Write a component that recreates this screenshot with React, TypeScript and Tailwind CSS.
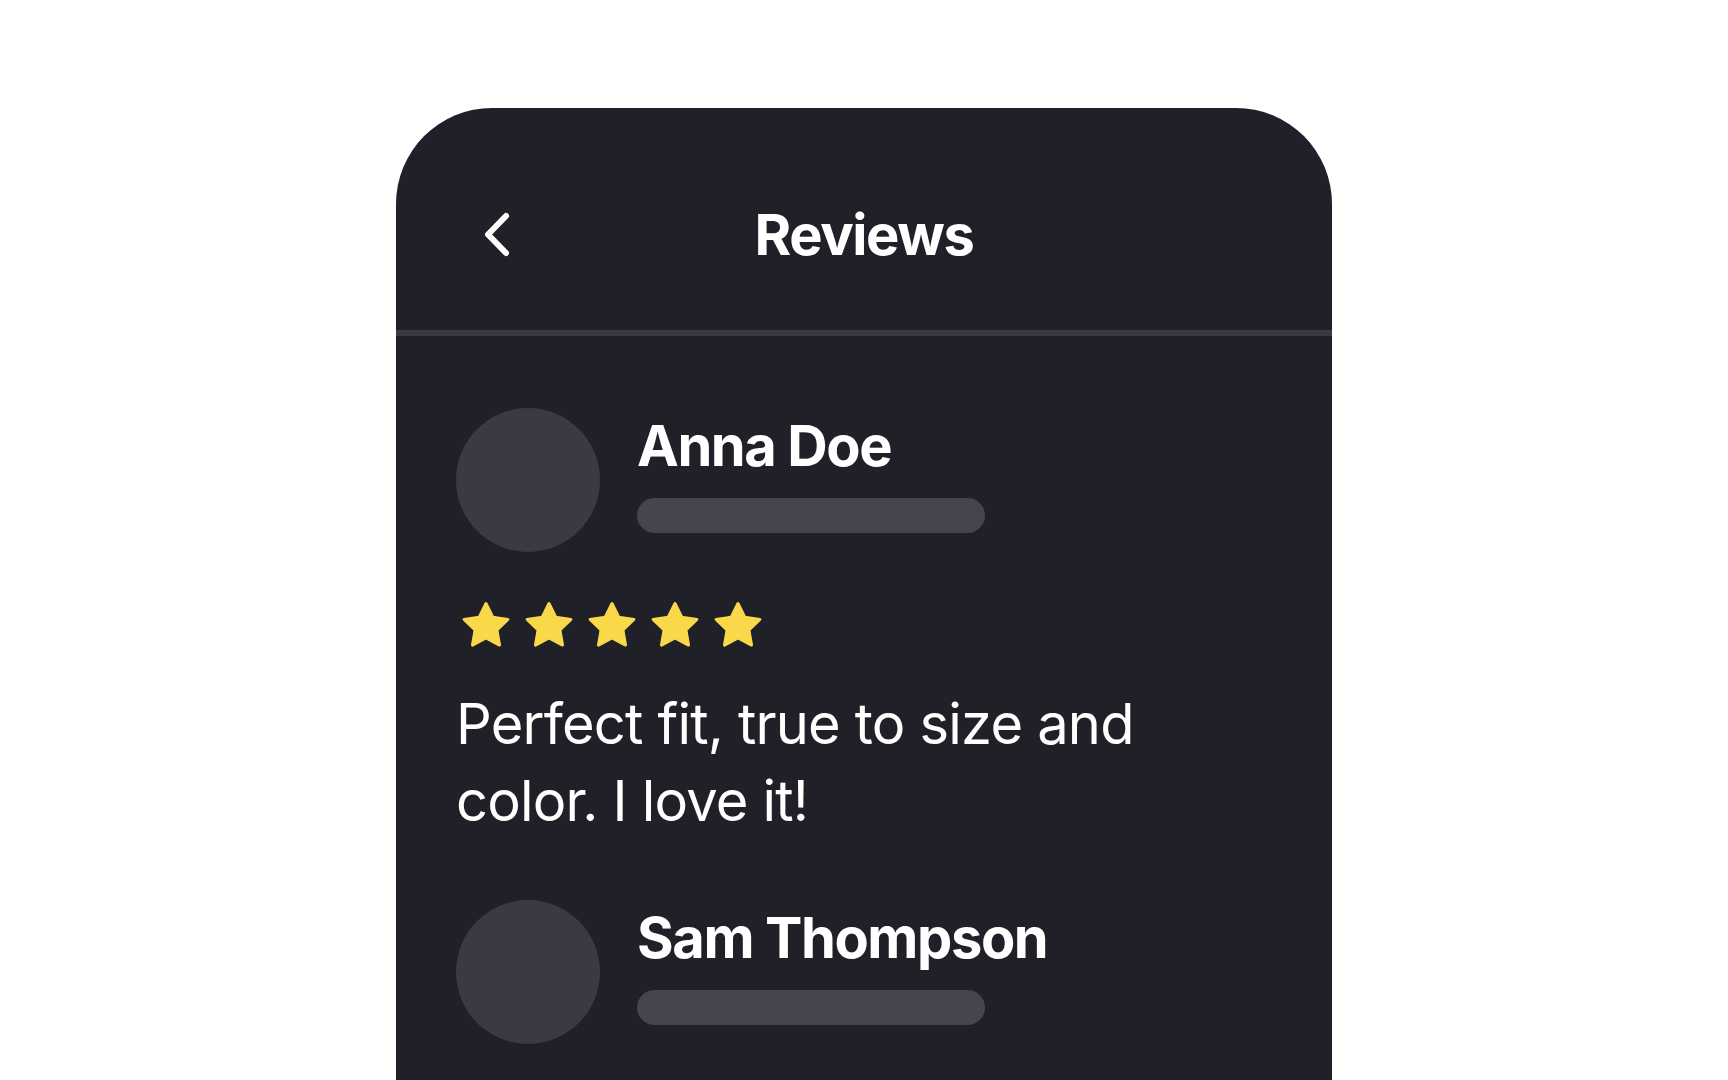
import React from "react";

type Review = {
  name: string;
  rating: number;
  text: string;
};

const reviews: Review[] = [
  { name: "Anna Doe", rating: 5, text: "Perfect fit, true to size and color. I love it!" },
  { name: "Sam Thompson", rating: 4, text: "Great quality fabric, shipping was quick too." },
];

// rounded five-point star, points computed once
const starPoints = (() => {
  const cx = 24;
  const cy = 25.5;
  const R = 23;
  const r = 11.5;
  const pts: string[] = [];
  for (let i = 0; i < 10; i++) {
    const a = (-90 + i * 36) * (Math.PI / 180);
    const rad = i % 2 === 0 ? R : r;
    pts.push(`${(cx + rad * Math.cos(a)).toFixed(2)},${(cy + rad * Math.sin(a)).toFixed(2)}`);
  }
  return pts.join(" ");
})();

function Star() {
  return (
    <svg width="48" height="48" viewBox="0 0 48 48" className="shrink-0">
      <polygon points={starPoints} fill="#f9d949" stroke="#f9d949" strokeWidth="3" strokeLinejoin="round" />
    </svg>
  );
}

function ReviewItem({ review }: { review: Review }) {
  return (
    <div className="flex flex-col">
      <div className="flex items-start gap-[37px]">
        <div className="h-[144px] w-[144px] shrink-0 rounded-full bg-[#3a3a42]" />
        <div className="flex flex-col pt-[10px]">
          <span className="text-[56px] font-bold leading-none tracking-tight text-white">{review.name}</span>
          <div className="mt-[24px] h-[35px] w-[348px] rounded-full bg-[#45454e]" />
        </div>
      </div>
      <div className="ml-[6px] mt-[49px] flex gap-[15px]">
        {Array.from({ length: 5 }).map((_, i) => (
          <Star key={i} />
        ))}
      </div>
      <p className="mt-[37px] max-w-[780px] text-[56px] font-normal leading-[77px] tracking-[-0.8px] text-white">
        {review.text}
      </p>
    </div>
  );
}

export default function App() {
  return (
    <div className="h-screen overflow-hidden bg-white" style={{ fontFamily: "Inter, 'Liberation Sans', sans-serif" }}>
      <div className="mx-auto mt-[108px] min-h-[1400px] w-[936px] rounded-t-[96px] bg-[#202029]">
        <div className="relative flex justify-center border-b-[6px] border-[#393941] pb-[67px] pt-[99px]">
          <button aria-label="Back" className="absolute left-[86px] top-[102px]">
            <svg width="28" height="50" viewBox="0 0 28 50" fill="none">
              <path d="M24 6 L6 24.5 L24 43" stroke="white" strokeWidth="6" strokeLinecap="round" strokeLinejoin="round" />
            </svg>
          </button>
          <h1 className="text-[56px] font-bold leading-none tracking-tight text-white">Reviews</h1>
        </div>
        <div className="flex flex-col gap-[60px] px-[60px] pt-[72px]">
          {reviews.map((r) => (
            <ReviewItem key={r.name} review={r} />
          ))}
        </div>
      </div>
    </div>
  );
}
